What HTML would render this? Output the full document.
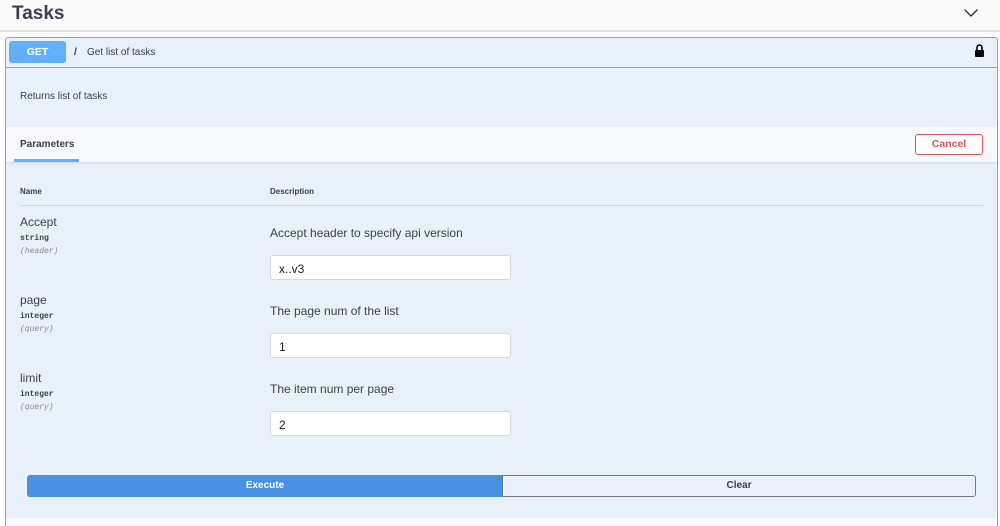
<!DOCTYPE html>
<html style="width:1000px;height:526px;overflow:hidden"><head><meta charset="utf-8"><style>
*{box-sizing:border-box;margin:0;padding:0}
body{width:1000px;height:526px;overflow:hidden;background:#fff;font-family:"Liberation Sans",sans-serif;color:#3b4151;position:relative}
.a{position:absolute}
.mono{font-family:"Liberation Mono",monospace;font-size:8px;font-weight:bold;color:#3b4151}
.it{font-family:"Liberation Mono",monospace;font-size:8px;font-style:italic;color:#888}
.inp{position:absolute;left:270px;width:241px;height:25px;background:#fff;border:1px solid #d9d9d9;border-radius:3px;font-size:12px;color:#222;padding:6px 8px}
</style></head><body>
<div class="a" style="left:0;top:0;width:1000px;height:32px;background:#fafafa;border-bottom:2px solid #e4e4e4"></div>
<div class="a" style="left:12px;top:3px;font-size:19px;font-weight:bold;color:#3b4151">Tasks</div>
<svg class="a" style="left:963px;top:8px" width="16" height="10" viewBox="0 0 16 10"><path d="M1.5 1.5L8 8L14.5 1.5" fill="none" stroke="#333" stroke-width="1.4"/></svg>
<div class="a" style="left:5px;top:37px;width:993px;height:489px;background:#e8f1fa;border:1px solid #61affe;border-bottom:none;border-radius:3px 3px 0 0"></div>
<div class="a" style="left:6px;top:67px;width:991px;height:1px;background:#61affe"></div>
<div class="a" style="left:9px;top:41px;width:57px;height:22px;background:#61affe;border-radius:3px;color:#fff;font-size:10.5px;font-weight:bold;text-align:center;line-height:22px">GET</div>
<div class="a" style="left:74px;top:46px;font-size:10.5px;font-weight:bold">/</div>
<div class="a" style="left:87px;top:47px;font-size:10px">Get list of tasks</div>
<svg class="a" style="left:974px;top:43px" width="11" height="15" viewBox="0 0 11 15"><path d="M3 7V4.5a2.5 2.5 0 0 1 5 0V7" fill="none" stroke="#000" stroke-width="1.6"/><rect x="1" y="7" width="9" height="7" rx="1" fill="#000"/></svg>
<div class="a" style="left:20px;top:91px;font-size:10px">Returns list of tasks</div>
<div class="a" style="left:6px;top:127px;width:991px;height:35px;background:#f7f9fc;box-shadow:0 1px 2px rgba(0,0,0,.1)"></div>
<div class="a" style="left:20px;top:139px;font-size:10px;font-weight:bold">Parameters</div>
<div class="a" style="left:14px;top:159px;width:65px;height:3px;background:#61affe"></div>
<div class="a" style="left:915px;top:134px;width:68px;height:21px;border:1.5px solid #e0545b;border-radius:3px;background:#fff;color:#e0545b;font-size:10.5px;font-weight:bold;text-align:center;line-height:19px">Cancel</div>
<div class="a" style="left:20px;top:187px;font-size:8px;font-weight:bold">Name</div>
<div class="a" style="left:270px;top:187px;font-size:8px;font-weight:bold">Description</div>
<div class="a" style="left:20px;top:205px;width:963px;height:1px;background:#cfd8e2"></div>

<div class="a" style="left:20px;top:215px;font-size:12px">Accept</div>
<div class="a mono" style="left:20px;top:234px">string</div>
<div class="a it" style="left:20px;top:247px">(header)</div>
<div class="a" style="left:270px;top:226px;font-size:12px">Accept header to specify api version</div>
<div class="inp" style="top:255px">x..v3</div>

<div class="a" style="left:20px;top:293px;font-size:12px">page</div>
<div class="a mono" style="left:20px;top:312px">integer</div>
<div class="a it" style="left:20px;top:325px">(query)</div>
<div class="a" style="left:270px;top:304px;font-size:12px">The page num of the list</div>
<div class="inp" style="top:333px">1</div>

<div class="a" style="left:20px;top:371px;font-size:12px">limit</div>
<div class="a mono" style="left:20px;top:390px">integer</div>
<div class="a it" style="left:20px;top:403px">(query)</div>
<div class="a" style="left:270px;top:382px;font-size:12px">The item num per page</div>
<div class="inp" style="top:411px">2</div>

<div class="a" style="left:27px;top:475px;width:476px;height:22px;background:#4990e2;border-radius:3px 0 0 3px;color:#fff;font-size:10px;font-weight:bold;text-align:center;line-height:22px">Execute</div>
<div class="a" style="left:502px;top:475px;width:474px;height:22px;border:1.5px solid #777;border-radius:0 3px 3px 0;color:#3b4151;font-size:10px;font-weight:bold;text-align:center;line-height:19px">Clear</div>
<div class="a" style="left:6px;top:518px;width:991px;height:8px;background:#f7f9fc"></div>
</body></html>
